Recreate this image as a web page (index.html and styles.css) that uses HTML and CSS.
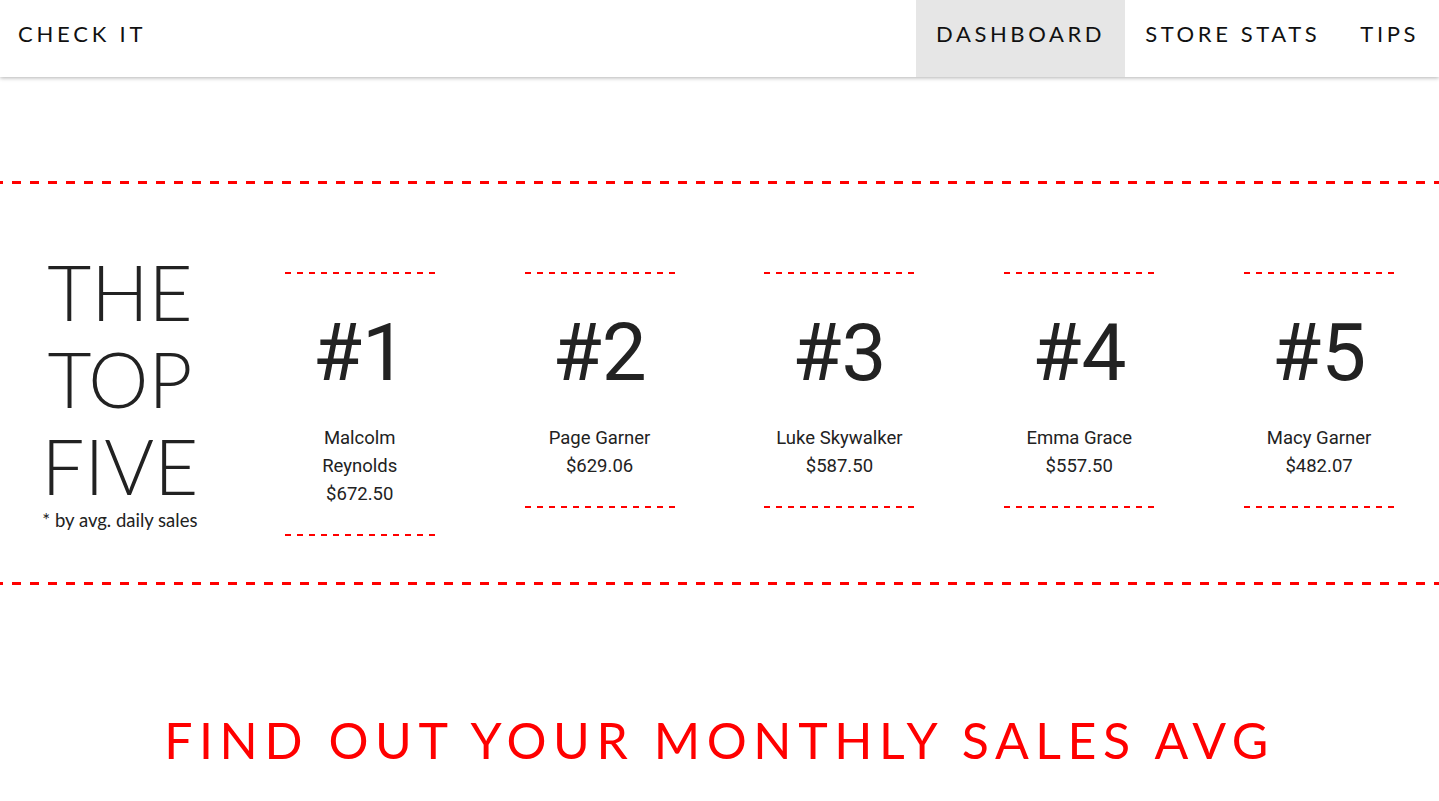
FILE: index.html
```html
<!DOCTYPE html>
<html lang="en">
<head>
<meta charset="utf-8">
<title>Check It</title>
<link rel="stylesheet" href="styles.css">
</head>
<body>
<header class="navbar">
  <div class="brand">CHECK IT</div>
  <nav class="nav">
    <a class="nav-item active" href="#">DASHBOARD</a>
    <a class="nav-item" href="#">STORE STATS</a>
    <a class="nav-item" href="#">TIPS</a>
  </nav>
</header>

<section class="top-five">
  <div class="title-col">
    <h1 class="title">THE<br>TOP<br>FIVE</h1>
    <p class="subtitle">* by avg. daily sales</p>
  </div>
  <div class="card">
    <div class="rank">#1</div>
    <div class="name">Malcolm<br>Reynolds</div>
    <div class="amount">$672.50</div>
  </div>
  <div class="card">
    <div class="rank">#2</div>
    <div class="name">Page Garner</div>
    <div class="amount">$629.06</div>
  </div>
  <div class="card">
    <div class="rank">#3</div>
    <div class="name">Luke Skywalker</div>
    <div class="amount">$587.50</div>
  </div>
  <div class="card">
    <div class="rank">#4</div>
    <div class="name">Emma Grace</div>
    <div class="amount">$557.50</div>
  </div>
  <div class="card">
    <div class="rank">#5</div>
    <div class="name">Macy Garner</div>
    <div class="amount">$482.07</div>
  </div>
</section>

<section class="monthly">
  <h2 class="monthly-title">FIND OUT YOUR MONTHLY SALES AVG</h2>
</section>
</body>
</html>
```

FILE: styles.css
```css
* { box-sizing: border-box; }

html, body {
  margin: 0;
  padding: 0;
  background: #fff;
  overflow: hidden;
}

body {
  font-family: Lato, "Liberation Sans", sans-serif;
  color: #222;
}

.navbar {
  height: 77px;
  display: flex;
  align-items: stretch;
  justify-content: space-between;
  background: #fff;
  box-shadow: 0 1px 4px rgba(0, 0, 0, 0.3);
  position: relative;
}

.brand {
  display: flex;
  align-items: center;
  padding: 0 0 10px 18px;
  font-size: 22px;
  font-weight: 400;
  letter-spacing: 3.8px;
  color: #111;
}

.nav {
  display: flex;
}

.nav-item {
  display: flex;
  align-items: center;
  padding: 0 20px 10px;
  font-size: 22px;
  letter-spacing: 3.6px;
  color: #111;
  text-decoration: none;
}

.nav-item.active {
  background: #e6e6e6;
}

.top-five {
  margin-top: 104px;
  height: 404px;
  display: grid;
  grid-template-columns: repeat(6, 1fr);
  align-items: start;
  padding-top: 91px;
  background:
    repeating-linear-gradient(to right, #ff0000 0 3px, transparent 3px 12px, #ff0000 12px 18px) left top / 100% 3px no-repeat,
    repeating-linear-gradient(to right, #ff0000 0 3px, transparent 3px 12px, #ff0000 12px 18px) left bottom / 100% 3px no-repeat;
}

.title-col {
  text-align: center;
  margin-top: -24px;
}

.title {
  margin: 0;
  font-size: 76px;
  font-weight: 300;
  line-height: 87px;
  color: #222;
}

.subtitle {
  margin: 0;
  font-size: 18.5px;
  line-height: 22px;
  font-weight: 400;
  color: #222;
}

.card {
  width: 150px;
  justify-self: center;
  text-align: center;
  font-family: Roboto, "Liberation Sans", sans-serif;
  padding: 2px 0 28px;
  background:
    repeating-linear-gradient(to right, #ff0000 0 6px, transparent 6px 12px) left top / 100% 2px no-repeat,
    repeating-linear-gradient(to right, #ff0000 0 6px, transparent 6px 12px) left bottom / 100% 2px no-repeat;
}

.rank {
  font-size: 80px;
  line-height: 1;
  margin-top: 39px;
  color: #222;
}

.name, .amount {
  font-size: 18.5px;
  line-height: 28px;
  color: #222;
}

.name {
  margin-top: 31px;
}

.monthly {
  text-align: center;
  padding-top: 125px;
}

.monthly-title {
  margin: 0;
  font-size: 50px;
  font-weight: 400;
  letter-spacing: 6.6px;
  color: #ff0000;
}
```
